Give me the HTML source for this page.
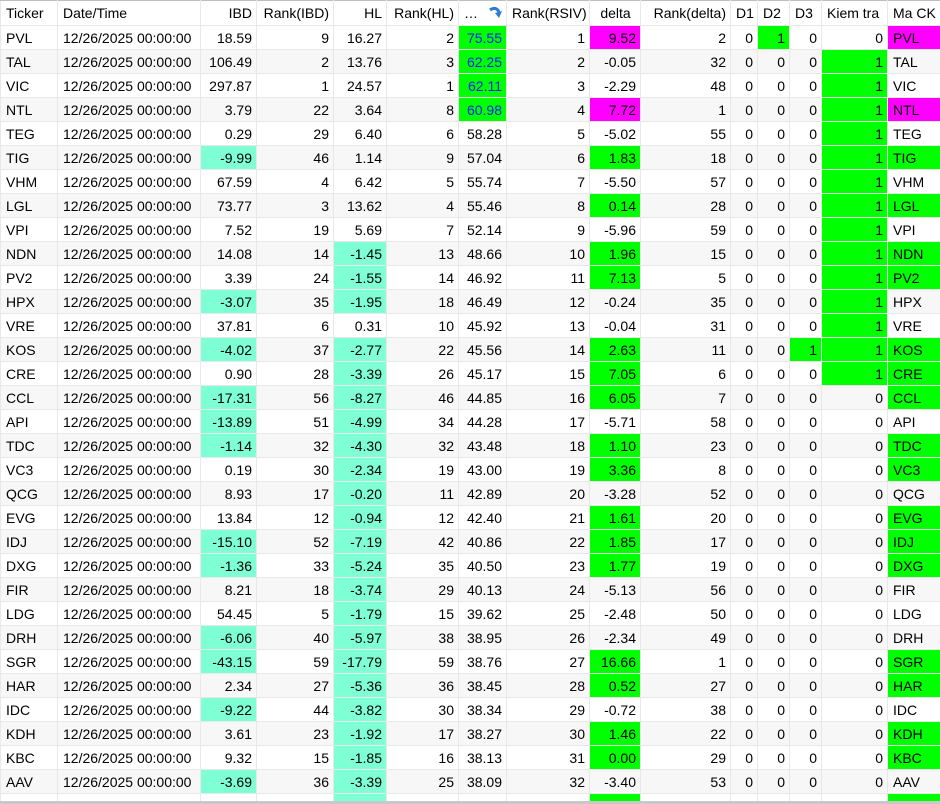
<!DOCTYPE html>
<html><head><meta charset="utf-8"><style>
html,body{margin:0;padding:0;background:#fff;width:940px;height:804px;overflow:hidden}
body{font-family:"Liberation Sans",sans-serif;font-size:14px;color:#000;position:relative}
table{border-collapse:collapse;table-layout:fixed;position:absolute;left:0;top:0;width:940px}
td,th{height:23px;padding:0 4px 0 5px;border:1px solid #e8e8e8;white-space:nowrap;overflow:hidden;font-weight:normal}
th{text-align:left;height:24px;border-top:1px solid #bdbdbd}
th.r{text-align:right}
td{text-align:right}
td.l{text-align:left}
tbody tr:nth-child(even) td{background:#f7f7f7}
tbody tr td.g{background:#00ff00}
tbody tr td.a{background:#7fffd4}
tbody tr td.m{background:#ff00ff}
td.b{color:#1a1aff}
.bar{position:absolute;left:0;top:801px;width:940px;height:3px;background:#c8c8c8}
</style></head><body>
<table>
<colgroup><col style="width:57px"><col style="width:143px"><col style="width:56px"><col style="width:77px"><col style="width:53px"><col style="width:72px"><col style="width:48px"><col style="width:83px"><col style="width:51px"><col style="width:90px"><col style="width:27px"><col style="width:32px"><col style="width:32px"><col style="width:66px"><col style="width:53px"></colgroup>
<thead><tr><th>Ticker</th><th>Date/Time</th><th class="r">IBD</th><th class="r">Rank(IBD)</th><th class="r">HL</th><th class="r">Rank(HL)</th><th>… <svg width="16" height="14" viewBox="0 0 16 14" style="vertical-align:-2px;margin-left:6px"><path d="M2 4 Q8 0 11 6" stroke="#2b7bd8" stroke-width="3" fill="none"/><path d="M7 7 L14 5 L11 12 Z" fill="#2b7bd8"/></svg></th><th class="r">Rank(RSIV)</th><th style="text-align:center">delta</th><th class="r">Rank(delta)</th><th>D1</th><th>D2</th><th>D3</th><th>Kiem tra</th><th>Ma CK</th></tr></thead>
<tbody>
<tr><td class="l">PVL</td><td class="l">12/26/2025 00:00:00</td><td>18.59</td><td>9</td><td>16.27</td><td>2</td><td class="g b">75.55</td><td>1</td><td class="m">9.52</td><td>2</td><td>0</td><td class="g">1</td><td>0</td><td>0</td><td class="l m">PVL</td></tr>
<tr><td class="l">TAL</td><td class="l">12/26/2025 00:00:00</td><td>106.49</td><td>2</td><td>13.76</td><td>3</td><td class="g b">62.25</td><td>2</td><td>-0.05</td><td>32</td><td>0</td><td>0</td><td>0</td><td class="g">1</td><td class="l">TAL</td></tr>
<tr><td class="l">VIC</td><td class="l">12/26/2025 00:00:00</td><td>297.87</td><td>1</td><td>24.57</td><td>1</td><td class="g b">62.11</td><td>3</td><td>-2.29</td><td>48</td><td>0</td><td>0</td><td>0</td><td class="g">1</td><td class="l">VIC</td></tr>
<tr><td class="l">NTL</td><td class="l">12/26/2025 00:00:00</td><td>3.79</td><td>22</td><td>3.64</td><td>8</td><td class="g b">60.98</td><td>4</td><td class="m">7.72</td><td>1</td><td>0</td><td>0</td><td>0</td><td class="g">1</td><td class="l m">NTL</td></tr>
<tr><td class="l">TEG</td><td class="l">12/26/2025 00:00:00</td><td>0.29</td><td>29</td><td>6.40</td><td>6</td><td>58.28</td><td>5</td><td>-5.02</td><td>55</td><td>0</td><td>0</td><td>0</td><td class="g">1</td><td class="l">TEG</td></tr>
<tr><td class="l">TIG</td><td class="l">12/26/2025 00:00:00</td><td class="a">-9.99</td><td>46</td><td>1.14</td><td>9</td><td>57.04</td><td>6</td><td class="g">1.83</td><td>18</td><td>0</td><td>0</td><td>0</td><td class="g">1</td><td class="l g">TIG</td></tr>
<tr><td class="l">VHM</td><td class="l">12/26/2025 00:00:00</td><td>67.59</td><td>4</td><td>6.42</td><td>5</td><td>55.74</td><td>7</td><td>-5.50</td><td>57</td><td>0</td><td>0</td><td>0</td><td class="g">1</td><td class="l">VHM</td></tr>
<tr><td class="l">LGL</td><td class="l">12/26/2025 00:00:00</td><td>73.77</td><td>3</td><td>13.62</td><td>4</td><td>55.46</td><td>8</td><td class="g">0.14</td><td>28</td><td>0</td><td>0</td><td>0</td><td class="g">1</td><td class="l g">LGL</td></tr>
<tr><td class="l">VPI</td><td class="l">12/26/2025 00:00:00</td><td>7.52</td><td>19</td><td>5.69</td><td>7</td><td>52.14</td><td>9</td><td>-5.96</td><td>59</td><td>0</td><td>0</td><td>0</td><td class="g">1</td><td class="l">VPI</td></tr>
<tr><td class="l">NDN</td><td class="l">12/26/2025 00:00:00</td><td>14.08</td><td>14</td><td class="a">-1.45</td><td>13</td><td>48.66</td><td>10</td><td class="g">1.96</td><td>15</td><td>0</td><td>0</td><td>0</td><td class="g">1</td><td class="l g">NDN</td></tr>
<tr><td class="l">PV2</td><td class="l">12/26/2025 00:00:00</td><td>3.39</td><td>24</td><td class="a">-1.55</td><td>14</td><td>46.92</td><td>11</td><td class="g">7.13</td><td>5</td><td>0</td><td>0</td><td>0</td><td class="g">1</td><td class="l g">PV2</td></tr>
<tr><td class="l">HPX</td><td class="l">12/26/2025 00:00:00</td><td class="a">-3.07</td><td>35</td><td class="a">-1.95</td><td>18</td><td>46.49</td><td>12</td><td>-0.24</td><td>35</td><td>0</td><td>0</td><td>0</td><td class="g">1</td><td class="l">HPX</td></tr>
<tr><td class="l">VRE</td><td class="l">12/26/2025 00:00:00</td><td>37.81</td><td>6</td><td>0.31</td><td>10</td><td>45.92</td><td>13</td><td>-0.04</td><td>31</td><td>0</td><td>0</td><td>0</td><td class="g">1</td><td class="l">VRE</td></tr>
<tr><td class="l">KOS</td><td class="l">12/26/2025 00:00:00</td><td class="a">-4.02</td><td>37</td><td class="a">-2.77</td><td>22</td><td>45.56</td><td>14</td><td class="g">2.63</td><td>11</td><td>0</td><td>0</td><td class="g">1</td><td class="g">1</td><td class="l g">KOS</td></tr>
<tr><td class="l">CRE</td><td class="l">12/26/2025 00:00:00</td><td>0.90</td><td>28</td><td class="a">-3.39</td><td>26</td><td>45.17</td><td>15</td><td class="g">7.05</td><td>6</td><td>0</td><td>0</td><td>0</td><td class="g">1</td><td class="l g">CRE</td></tr>
<tr><td class="l">CCL</td><td class="l">12/26/2025 00:00:00</td><td class="a">-17.31</td><td>56</td><td class="a">-8.27</td><td>46</td><td>44.85</td><td>16</td><td class="g">6.05</td><td>7</td><td>0</td><td>0</td><td>0</td><td>0</td><td class="l g">CCL</td></tr>
<tr><td class="l">API</td><td class="l">12/26/2025 00:00:00</td><td class="a">-13.89</td><td>51</td><td class="a">-4.99</td><td>34</td><td>44.28</td><td>17</td><td>-5.71</td><td>58</td><td>0</td><td>0</td><td>0</td><td>0</td><td class="l">API</td></tr>
<tr><td class="l">TDC</td><td class="l">12/26/2025 00:00:00</td><td class="a">-1.14</td><td>32</td><td class="a">-4.30</td><td>32</td><td>43.48</td><td>18</td><td class="g">1.10</td><td>23</td><td>0</td><td>0</td><td>0</td><td>0</td><td class="l g">TDC</td></tr>
<tr><td class="l">VC3</td><td class="l">12/26/2025 00:00:00</td><td>0.19</td><td>30</td><td class="a">-2.34</td><td>19</td><td>43.00</td><td>19</td><td class="g">3.36</td><td>8</td><td>0</td><td>0</td><td>0</td><td>0</td><td class="l g">VC3</td></tr>
<tr><td class="l">QCG</td><td class="l">12/26/2025 00:00:00</td><td>8.93</td><td>17</td><td class="a">-0.20</td><td>11</td><td>42.89</td><td>20</td><td>-3.28</td><td>52</td><td>0</td><td>0</td><td>0</td><td>0</td><td class="l">QCG</td></tr>
<tr><td class="l">EVG</td><td class="l">12/26/2025 00:00:00</td><td>13.84</td><td>12</td><td class="a">-0.94</td><td>12</td><td>42.40</td><td>21</td><td class="g">1.61</td><td>20</td><td>0</td><td>0</td><td>0</td><td>0</td><td class="l g">EVG</td></tr>
<tr><td class="l">IDJ</td><td class="l">12/26/2025 00:00:00</td><td class="a">-15.10</td><td>52</td><td class="a">-7.19</td><td>42</td><td>40.86</td><td>22</td><td class="g">1.85</td><td>17</td><td>0</td><td>0</td><td>0</td><td>0</td><td class="l g">IDJ</td></tr>
<tr><td class="l">DXG</td><td class="l">12/26/2025 00:00:00</td><td class="a">-1.36</td><td>33</td><td class="a">-5.24</td><td>35</td><td>40.50</td><td>23</td><td class="g">1.77</td><td>19</td><td>0</td><td>0</td><td>0</td><td>0</td><td class="l g">DXG</td></tr>
<tr><td class="l">FIR</td><td class="l">12/26/2025 00:00:00</td><td>8.21</td><td>18</td><td class="a">-3.74</td><td>29</td><td>40.13</td><td>24</td><td>-5.13</td><td>56</td><td>0</td><td>0</td><td>0</td><td>0</td><td class="l">FIR</td></tr>
<tr><td class="l">LDG</td><td class="l">12/26/2025 00:00:00</td><td>54.45</td><td>5</td><td class="a">-1.79</td><td>15</td><td>39.62</td><td>25</td><td>-2.48</td><td>50</td><td>0</td><td>0</td><td>0</td><td>0</td><td class="l">LDG</td></tr>
<tr><td class="l">DRH</td><td class="l">12/26/2025 00:00:00</td><td class="a">-6.06</td><td>40</td><td class="a">-5.97</td><td>38</td><td>38.95</td><td>26</td><td>-2.34</td><td>49</td><td>0</td><td>0</td><td>0</td><td>0</td><td class="l">DRH</td></tr>
<tr><td class="l">SGR</td><td class="l">12/26/2025 00:00:00</td><td class="a">-43.15</td><td>59</td><td class="a">-17.79</td><td>59</td><td>38.76</td><td>27</td><td class="g">16.66</td><td>1</td><td>0</td><td>0</td><td>0</td><td>0</td><td class="l g">SGR</td></tr>
<tr><td class="l">HAR</td><td class="l">12/26/2025 00:00:00</td><td>2.34</td><td>27</td><td class="a">-5.36</td><td>36</td><td>38.45</td><td>28</td><td class="g">0.52</td><td>27</td><td>0</td><td>0</td><td>0</td><td>0</td><td class="l g">HAR</td></tr>
<tr><td class="l">IDC</td><td class="l">12/26/2025 00:00:00</td><td class="a">-9.22</td><td>44</td><td class="a">-3.82</td><td>30</td><td>38.34</td><td>29</td><td>-0.72</td><td>38</td><td>0</td><td>0</td><td>0</td><td>0</td><td class="l">IDC</td></tr>
<tr><td class="l">KDH</td><td class="l">12/26/2025 00:00:00</td><td>3.61</td><td>23</td><td class="a">-1.92</td><td>17</td><td>38.27</td><td>30</td><td class="g">1.46</td><td>22</td><td>0</td><td>0</td><td>0</td><td>0</td><td class="l g">KDH</td></tr>
<tr><td class="l">KBC</td><td class="l">12/26/2025 00:00:00</td><td>9.32</td><td>15</td><td class="a">-1.85</td><td>16</td><td>38.13</td><td>31</td><td class="g">0.00</td><td>29</td><td>0</td><td>0</td><td>0</td><td>0</td><td class="l g">KBC</td></tr>
<tr><td class="l">AAV</td><td class="l">12/26/2025 00:00:00</td><td class="a">-3.69</td><td>36</td><td class="a">-3.39</td><td>25</td><td>38.09</td><td>32</td><td>-3.40</td><td>53</td><td>0</td><td>0</td><td>0</td><td>0</td><td class="l">AAV</td></tr>
<tr><td class="l">NBC</td><td class="l">12/26/2025 00:00:00</td><td>13.33</td><td>13</td><td class="a">-2.73</td><td>28</td><td>37.99</td><td>33</td><td class="g">1.85</td><td>16</td><td>0</td><td>0</td><td>0</td><td>0</td><td class="l g">NBC</td></tr>
</tbody></table>
<div class="bar"></div>
</body></html>
